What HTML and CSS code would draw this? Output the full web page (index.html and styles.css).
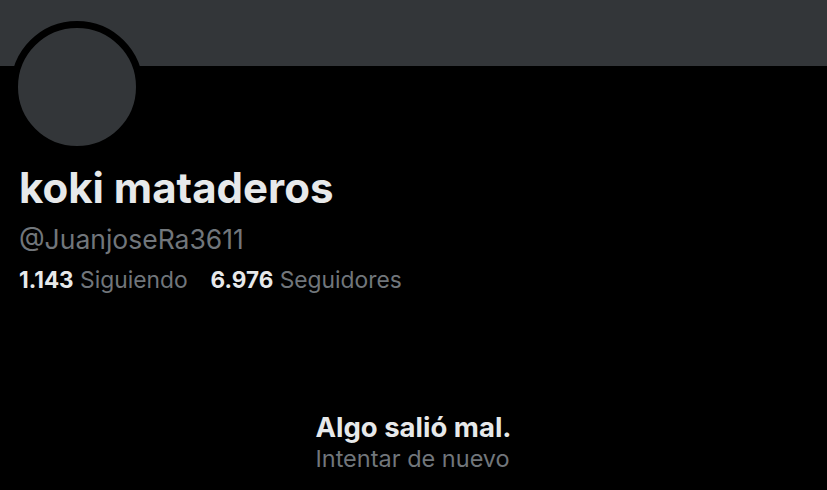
FILE: index.html
```html
<!DOCTYPE html>
<html lang="es">
<head>
<meta charset="utf-8">
<link rel="stylesheet" href="styles.css">
</head>
<body>
<div class="page">
  <div class="banner"></div>
  <div class="profile">
    <div class="avatar"></div>
    <h1 class="name">koki mataderos</h1>
    <div class="handle">@JuanjoseRa3611</div>
    <div class="stats">
      <span class="stat"><b>1.143</b> Siguiendo</span>
      <span class="stat"><b>6.976</b> Seguidores</span>
    </div>
  </div>
  <div class="error">
    <div class="error-box">
      <div class="error-title">Algo salió mal.</div>
      <div class="error-retry">Intentar de nuevo</div>
    </div>
  </div>
</div>
</body>
</html>
```

FILE: styles.css
```css
html, body {
  margin: 0;
  padding: 0;
  background: #000;
}
.page {
  width: 827px;
  height: 490px;
  overflow: hidden;
  background: #000;
  font-family: Inter, "Noto Sans", sans-serif;
  color: #e7e9ea;
}
.banner {
  height: 66px;
  background: #333639;
}
.profile {
  padding: 0 19px;
}
.avatar {
  width: 118px;
  height: 118px;
  margin: -45px 0 11px -8.5px;
  border: 7px solid #000;
  border-radius: 50%;
  background: #333639;
}
.name {
  margin: 0;
  font-size: 42px;
  font-weight: 700;
  line-height: 48px;
  color: #e7e9ea;
}
.handle {
  margin-top: 11px;
  font-size: 26.5px;
  line-height: 32px;
  color: #71767b;
}
.stats {
  display: flex;
  gap: 23px;
  margin-top: 9px;
  font-size: 22.8px;
  line-height: 32px;
  color: #71767b;
}
.stat b {
  color: #e7e9ea;
  font-weight: 700;
  font-size: 22.5px;
}
.error {
  display: flex;
  justify-content: center;
  padding-top: 114px;
}
.error-box {
  display: flex;
  flex-direction: column;
}
.error-title {
  font-size: 27.5px;
  font-weight: 700;
  line-height: 34px;
  color: #e7e9ea;
}
.error-retry {
  font-size: 23.5px;
  line-height: 30px;
  color: #71767b;
}
```
